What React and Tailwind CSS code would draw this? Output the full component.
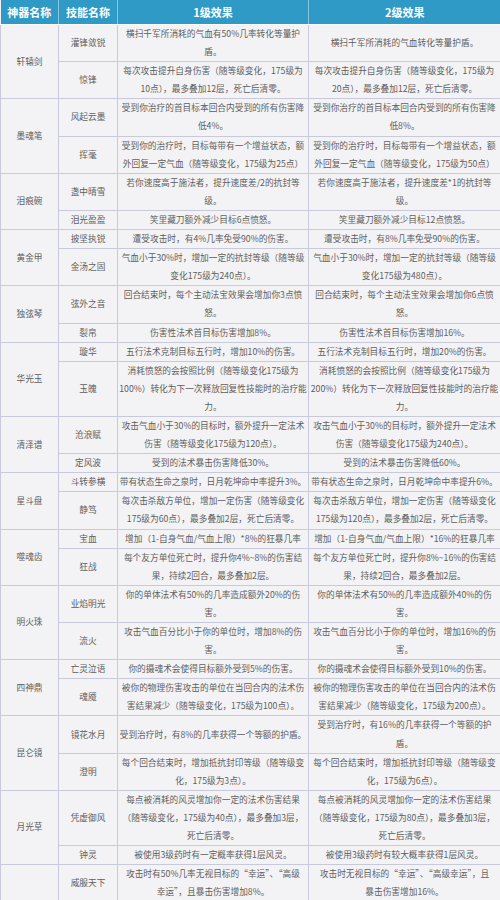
import React from 'react';

// 每项：[技能名称, 1级效果的各行, 2级效果的各行]，行按原图换行。
const groups = [
  {
    name: '轩辕剑',
    rows: [
      ['灌锋敛锐', ['横扫千军所消耗的气血有50%几率转化等量护', '盾。'], ['横扫千军所消耗的气血转化等量护盾。']],
      ['惊锋', ['每次攻击提升自身伤害（随等级变化，175级为', '10点），最多叠加12层，死亡后清零。'], ['每次攻击提升自身伤害（随等级变化，175级为', '20点），最多叠加12层，死亡后清零。']],
    ],
  },
  {
    name: '墨魂笔',
    rows: [
      ['风起云墨', ['受到你治疗的首目标本回合内受到的所有伤害降', '低4%。'], ['受到你治疗的首目标本回合内受到的所有伤害降', '低8%。']],
      ['挥毫', ['受到你的治疗时，目标每带有一个增益状态，额', '外回复一定气血（随等级变化，175级为25点）'], ['受到你的治疗时，目标每带有一个增益状态，额', '外回复一定气血（随等级变化，175级为50点）']],
    ],
  },
  {
    name: '泪痕碗',
    rows: [
      ['盏中晴雪', ['若你速度高于施法者，提升速度差/2的抗封等', '级。'], ['若你速度高于施法者，提升速度差*1的抗封等', '级。']],
      ['泪光盈盈', ['笑里藏刀额外减少目标6点愤怒。'], ['笑里藏刀额外减少目标12点愤怒。']],
    ],
  },
  {
    name: '黄金甲',
    rows: [
      ['披坚执锐', ['遭受攻击时，有4%几率免受90%的伤害。'], ['遭受攻击时，有8%几率免受90%的伤害。']],
      ['金汤之固', ['气血小于30%时，增加一定的抗封等级（随等级', '变化175级为240点）。'], ['气血小于30%时，增加一定的抗封等级（随等级', '变化175级为480点）。']],
    ],
  },
  {
    name: '独弦琴',
    rows: [
      ['弦外之音', ['回合结束时，每个主动法宝效果会增加你3点愤', '怒。'], ['回合结束时，每个主动法宝效果会增加你6点愤', '怒。']],
      ['裂帛', ['伤害性法术首目标伤害增加8%。'], ['伤害性法术首目标伤害增加16%。']],
    ],
  },
  {
    name: '华光玉',
    rows: [
      ['璇华', ['五行法术克制目标五行时，增加10%的伤害。'], ['五行法术克制目标五行时，增加20%的伤害。']],
      ['玉魄', ['消耗愤怒的会按照比例（随等级变化175级为', '100%）转化为下一次释放回复性技能时的治疗能', '力。'], ['消耗愤怒的会按照比例（随等级变化175级为', '200%）转化为下一次释放回复性技能时的治疗能', '力。']],
    ],
  },
  {
    name: '清泽谱',
    rows: [
      ['沧浪赋', ['攻击气血小于30%的目标时，额外提升一定法术', '伤害（随等级变化175级为120点）。'], ['攻击气血小于30%的目标时，额外提升一定法术', '伤害（随等级变化175级为240点）。']],
      ['定风波', ['受到的法术暴击伤害降低30%。'], ['受到的法术暴击伤害降低60%。']],
    ],
  },
  {
    name: '星斗盘',
    rows: [
      ['斗转参横', ['带有状态生命之泉时，日月乾坤命中率提升3%。'], ['带有状态生命之泉时，日月乾坤命中率提升6%。']],
      ['静笃', ['每次击杀敌方单位，增加一定伤害（随等级变化', '175级为60点），最多叠加2层，死亡后清零。'], ['每次击杀敌方单位，增加一定伤害（随等级变化', '175级为120点），最多叠加2层，死亡后清零。']],
    ],
  },
  {
    name: '噬魂齿',
    rows: [
      ['宝血', ['增加（1-自身气血/气血上限）*8%的狂暴几率'], ['增加（1-自身气血/气血上限）*16%的狂暴几率']],
      ['狂战', ['每个友方单位死亡时，提升你4%~8%的伤害结', '果，持续2回合，最多叠加2层。'], ['每个友方单位死亡时，提升你8%~16%的伤害结', '果，持续2回合，最多叠加2层。']],
    ],
  },
  {
    name: '明火珠',
    rows: [
      ['业焰明光', ['你的单体法术有50%的几率造成额外20%的伤', '害。'], ['你的单体法术有50%的几率造成额外40%的伤', '害。']],
      ['流火', ['攻击气血百分比小于你的单位时，增加8%的伤', '害。'], ['攻击气血百分比小于你的单位时，增加16%的伤', '害。']],
    ],
  },
  {
    name: '四神鼎',
    rows: [
      ['亡灵泣语', ['你的摄魂术会使得目标额外受到5%的伤害。'], ['你的摄魂术会使得目标额外受到10%的伤害。']],
      ['魂魇', ['被你的物理伤害攻击的单位在当回合内的法术伤', '害结果减少（随等级变化，175级为100点）。'], ['被你的物理伤害攻击的单位在当回合内的法术伤', '害结果减少（随等级变化，175级为200点）。']],
    ],
  },
  {
    name: '昆仑镜',
    rows: [
      ['镜花水月', ['受到治疗时，有8%的几率获得一个等额的护盾。'], ['受到治疗时，有16%的几率获得一个等额的护', '盾。']],
      ['澄明', ['每个回合结束时，增加抵抗封印等级（随等级变', '化，175级为3点）。'], ['每个回合结束时，增加抵抗封印等级（随等级变', '化，175级为6点）。']],
    ],
  },
  {
    name: '月光草',
    rows: [
      ['凭虚御风', ['每点被消耗的风灵增加你一定的法术伤害结果', '（随等级变化，175级为40点），最多叠加3层，', '死亡后清零。'], ['每点被消耗的风灵增加你一定的法术伤害结果', '（随等级变化，175级为80点），最多叠加3层，', '死亡后清零。']],
      ['钟灵', ['被使用3级药时有一定概率获得1层风灵。'], ['被使用3级药时有较大概率获得1层风灵。']],
    ],
  },
  {
    name: '',
    rows: [
      ['威服天下', ['攻击时有50%几率无视目标的“幸运”、“高级', '幸运”，且暴击伤害增加8%。'], ['攻击时无视目标的“幸运”、“高级幸运”，且', '暴击伤害增加16%。']],
    ],
  },
];

const Lines = ({ lines }) =>
  lines.map((l, i) => (
    <span key={i} className="block whitespace-nowrap">
      {l}
    </span>
  ));

const cell = 'border border-[#c9c9dc] text-center align-middle p-0';

export default function App() {
  return (
    <div className="w-[500px] h-[900px] overflow-hidden bg-white font-['Noto_Sans_CJK_SC','Noto_Sans',sans-serif]">
      <table className="w-[500px] table-fixed border-collapse bg-[#f3f3f5] text-[8.7px] leading-[18.1px] text-[#5e5e5e]">
        <colgroup>
          <col className="w-[58px]" />
          <col className="w-[59px]" />
          <col className="w-[191px]" />
          <col className="w-[192px]" />
        </colgroup>
        <thead>
          <tr className="bg-[#2f9ac5] text-white text-[11px] font-bold leading-[24px]">
            <th className="border-r border-[#86c6e0] border-b border-b-white">神器名称</th>
            <th className="border-r border-[#86c6e0] border-b border-b-white">技能名称</th>
            <th className="border-r border-[#86c6e0] border-b border-b-white">1级效果</th>
            <th className="border-b border-b-white">2级效果</th>
          </tr>
        </thead>
        <tbody>
          {groups.map((g) =>
            g.rows.map(([skill, l1, l2], i) => (
              <tr key={g.name + skill}>
                {i === 0 && (
                  <td rowSpan={g.rows.length} className={cell}>
                    {g.name}
                  </td>
                )}
                <td className={cell}>{skill}</td>
                <td className={cell}>
                  <Lines lines={l1} />
                </td>
                <td className={cell}>
                  <Lines lines={l2} />
                </td>
              </tr>
            ))
          )}
        </tbody>
      </table>
    </div>
  );
}
